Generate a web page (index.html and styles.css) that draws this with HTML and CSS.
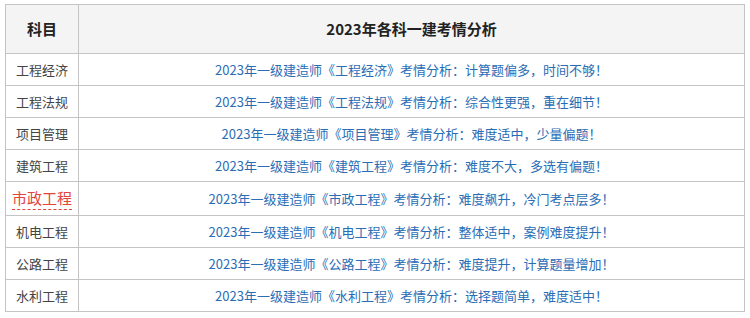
FILE: index.html
```html
<!DOCTYPE html>
<html lang="zh">
<head>
<meta charset="utf-8">
<link rel="stylesheet" href="styles.css">
</head>
<body>
<table class="exam">
  <colgroup><col class="c-subj"><col class="c-info"></colgroup>
  <thead>
    <tr><th>科目</th><th>2023年各科一建考情分析</th></tr>
  </thead>
  <tbody>
    <tr><td class="subj">工程经济</td><td class="info">2023年一级建造师《工程经济》考情分析：计算题偏多，时间不够！</td></tr>
    <tr><td class="subj">工程法规</td><td class="info">2023年一级建造师《工程法规》考情分析：综合性更强，重在细节！</td></tr>
    <tr><td class="subj">项目管理</td><td class="info">2023年一级建造师《项目管理》考情分析：难度适中，少量偏题！</td></tr>
    <tr><td class="subj">建筑工程</td><td class="info">2023年一级建造师《建筑工程》考情分析：难度不大，多选有偏题！</td></tr>
    <tr class="tall"><td class="subj"><span class="hl">市政工程</span></td><td class="info">2023年一级建造师《市政工程》考情分析：难度飙升，冷门考点层多！</td></tr>
    <tr><td class="subj">机电工程</td><td class="info">2023年一级建造师《机电工程》考情分析：整体适中，案例难度提升！</td></tr>
    <tr><td class="subj">公路工程</td><td class="info">2023年一级建造师《公路工程》考情分析：难度提升，计算题量增加！</td></tr>
    <tr><td class="subj">水利工程</td><td class="info">2023年一级建造师《水利工程》考情分析：选择题简单，难度适中！</td></tr>
  </tbody>
</table>
</body>
</html>
```
FILE: styles.css
```css
html, body {
  margin: 0;
  padding: 0;
  background: #fff;
}
body {
  padding: 4px 0 0 5px;
  font-family: "Noto Sans CJK SC", "Noto Sans", sans-serif;
}
.exam {
  width: 740px;
  border-collapse: collapse;
  table-layout: fixed;
  border: 1px solid #bdbdbd;
}
.c-subj { width: 73px; }
.exam th, .exam td {
  border: 1px solid #c4c4c4;
  text-align: center;
  padding: 0;
  line-height: 20px;
}
.exam th {
  height: 48px;
  background: #f4f4f4;
  font-size: 15px;
  font-weight: bold;
  color: #222;
}
.exam td {
  height: 31px;
  font-size: 13px;
}
.exam tr.tall td {
  height: 33px;
}
.subj { color: #444; }
.info { color: #2a6db5; }
.hl {
  color: #e2463b;
  font-size: 15px;
  border-bottom: 1px dashed #e2463b;
  padding-bottom: 1px;
}
```
